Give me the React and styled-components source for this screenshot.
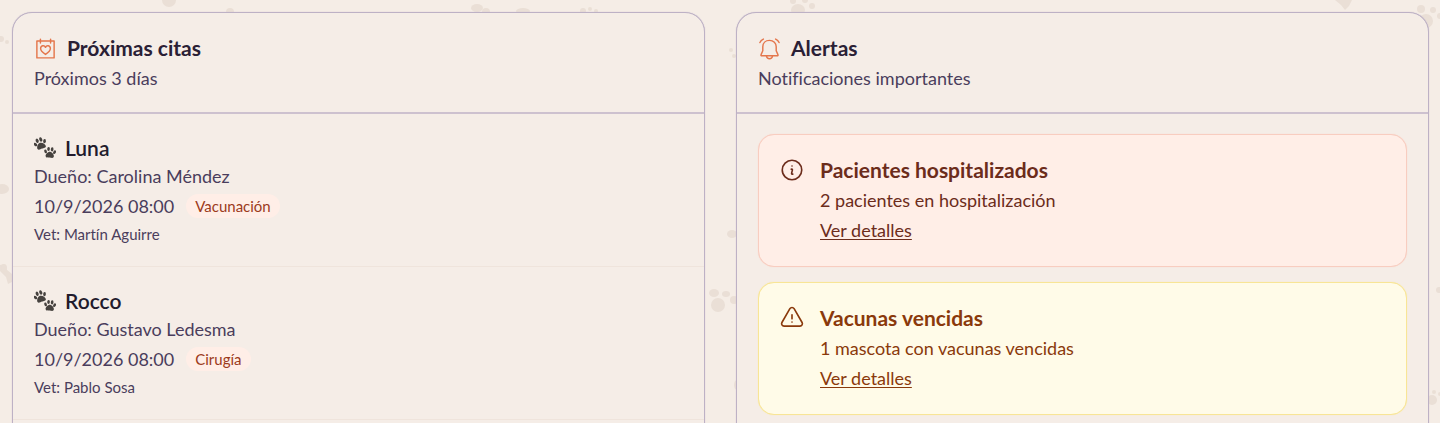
import React from 'react';
import styled, { createGlobalStyle } from 'styled-components';
import { HiOutlineInformationCircle, HiOutlineExclamationTriangle } from 'react-icons/hi2';

const GlobalStyle = createGlobalStyle`
  * { box-sizing: border-box; }
  body {
    margin: 0;
    background: #f5ede6;
    color: #4a3d5c;
    font-family: Lato, "Open Sans", sans-serif;
    font-size: 18px;
    line-height: 26px;
    font-variant-ligatures: none;
  }
  h2, h3, p, ul { margin: 0; padding: 0; }
`;

const Page = styled.main`
  position: relative;
  height: 100vh;
  overflow: hidden;
  padding: 12px 11px 0 12px;
  display: grid;
  grid-template-columns: 1fr 1fr;
  gap: 31px;
`;

const Backdrop = styled.svg`
  position: absolute;
  top: 0;
  left: 0;
  width: 100%;
  height: 100%;
  fill: #eadfd6;
`;

const Card = styled.section`
  position: relative;
  min-height: 480px;
  background: #f5ede7;
  border: 1px solid #bdb1c5;
  border-radius: 20px;
  box-shadow: 0 0 1px #bdb1c5;
`;

const CardHeader = styled.header`
  padding: 21px;
  border-bottom: 2px solid #cdc1cf;
`;

const TitleRow = styled.div`
  display: flex;
  align-items: center;
  gap: 10px;
  height: 28px;
  margin-bottom: 3px;
  svg { width: 23px; height: 23px; }
`;

const CardTitle = styled.h2`
  font-size: 21px;
  line-height: 28px;
  font-weight: 700;
  color: #2a2035;
`;

const List = styled.ul`
  list-style: none;
`;

const Appointment = styled.li`
  padding: 20px 21px;
  border-bottom: 1px solid #efe4dc;
`;

const PetRow = styled.div`
  display: flex;
  align-items: center;
  gap: 9px;
  svg { width: 22px; height: 22px; }
`;

const PetName = styled.h3`
  font-size: 21px;
  line-height: 28px;
  font-weight: 600;
  color: #221b2c;
`;

const Owner = styled.p`
  line-height: 28px;
`;

const When = styled.div`
  display: flex;
  align-items: center;
  gap: 12px;
  height: 32px;
`;

const Badge = styled.span`
  padding: 0 9px;
  border-radius: 12px;
  background: #ffeee7;
  color: #9c3b1c;
  font-size: 15px;
  line-height: 24px;
`;

const Vet = styled.p`
  font-size: 15px;
  line-height: 24px;
`;

const Alerts = styled.div`
  display: grid;
  gap: 15px;
  padding: 20px 21px;
`;

const tones = {
  coral: { bg: '#ffeee7', line: '#f8cdc0', text: '#6c2c1b' },
  amber: { bg: '#fffbe8', line: '#f8e596', text: '#8a390b' },
};

const AlertBox = styled.article`
  display: flex;
  align-items: flex-start;
  gap: 15px;
  padding: 22px 20px 23px;
  border: 1px solid ${({ $tone }) => tones[$tone].line};
  border-radius: 16px;
  background: ${({ $tone }) => tones[$tone].bg};
  color: ${({ $tone }) => tones[$tone].text};
  box-shadow: 0 0 1px ${({ $tone }) => tones[$tone].line};
  > svg { width: 26px; height: 26px; flex: none; }
`;

const AlertBody = styled.div`
  display: grid;
  gap: 4px;
  justify-items: start;
`;

const AlertTitle = styled.h3`
  font-size: 21px;
  line-height: 26px;
  font-weight: 700;
`;

const DetailLink = styled.a`
  color: inherit;
  text-decoration: underline;
  text-underline-offset: 2px;
`;

const CalendarHeart = () => (
  <svg viewBox="0 0 24 24" fill="none" stroke="#e4764c" strokeWidth="1.5" strokeLinejoin="round" strokeLinecap="round" aria-hidden="true">
    <path d="M3 4.2h18v17.6H3zM6.7 2.2v4M17.3 2.2v4" />
    <path d="M12 18.2C9 16.2 6.9 14.3 6.9 12c0-3.3 3.9-4 5.1-1.2C13.2 8 17.1 8.7 17.1 12c0 2.3-2.1 4.2-5.1 6.2z" />
  </svg>
);

const RingingBell = () => (
  <svg viewBox="0 0 24 24" fill="none" stroke="#e4764c" strokeWidth="1.5" strokeLinejoin="round" strokeLinecap="round" aria-hidden="true">
    <path d="M12 3.500c-4.200 0-7 2.800-7 6.800v4L3.200 18.400c-.3.800 0 1.100.8 1.100h16c.8 0 1.100-.3.800-1.100L19 14.300v-4c0-4-2.800-6.800-7-6.800z" />
    <path d="M8.800 19.700c.3 2 1.500 3 3.200 3s2.900-1 3.200-3M5.600 2.200C3.900 3 2.700 4.200 2 5.800M18.400 2.200c1.700.8 2.900 2 3.600 3.600" />
  </svg>
);

const Paw = ({ transform }) => (
  <g transform={transform}>
    <path d="M0-1C3-1 6 3 5.5 5.2 5 7.7 2 6.6 0 6.6S-5 7.7-5.5 5.2C-6 3-3-1 0-1z" />
    <ellipse cx="-6" cy="-1" rx="1.7" ry="2.6" transform="rotate(-25 -6 -1)" />
    <ellipse cx="-2.4" cy="-4.6" rx="1.8" ry="2.8" />
    <ellipse cx="2.4" cy="-4.6" rx="1.8" ry="2.8" />
    <ellipse cx="6" cy="-1" rx="1.7" ry="2.6" transform="rotate(25 6 -1)" />
  </g>
);

const PawPrints = () => (
  <svg viewBox="0 0 24 24" fill="#46423f" aria-hidden="true">
    <Paw transform="translate(6.8 7.2) rotate(-20) scale(.88)" />
    <Paw transform="translate(17.5 17) rotate(5) scale(.82)" />
  </svg>
);

const PetPattern = () => (
  <Backdrop aria-hidden="true">
    <circle cx="169" cy="0" r="7" />
    <circle cx="230" cy="12" r="4" />
    <circle cx="1" cy="39" r="3" />
    <circle cx="7" cy="42" r="2" />
    <ellipse cx="2" cy="189" rx="7" ry="5" />
    <path d="M0 265l4-1 2 5 6 5v8l-4 2-2-7-6-6z" />
    <ellipse cx="4" cy="268" rx="3" ry="4" />
    <ellipse cx="477" cy="8" rx="6" ry="4" />
    <circle cx="486" cy="12" r="4" />
    <ellipse cx="523" cy="11" rx="7" ry="3" />
    <circle cx="583" cy="11" r="3" />
    <circle cx="590" cy="9" r="2" />
    <circle cx="596" cy="11" r="2" />
    <circle cx="731" cy="50" r="2" />
    <circle cx="734" cy="56" r="2" />
    <ellipse cx="732" cy="234" rx="5" ry="4" />
    <ellipse cx="714" cy="293" rx="5" ry="4" />
    <ellipse cx="726" cy="294" rx="4" ry="3" />
    <circle cx="734" cy="300" r="4" />
    <circle cx="718" cy="305" r="7" />
    <ellipse cx="737" cy="385" rx="3" ry="5" />
    <ellipse cx="798" cy="10" rx="7" ry="6" />
    <circle cx="793" cy="1" r="3" />
    <circle cx="805" cy="0" r="3" />
    <circle cx="812" cy="6" r="3" />
    <path d="M1335 0h17l-3 6-4 4-4-5z" />
    <circle cx="1421" cy="9" r="4" />
    <circle cx="1433" cy="10" r="3" />
    <circle cx="1440" cy="16" r="3" />
    <circle cx="1426" cy="21" r="7" />
    <circle cx="1439" cy="290" r="3" />
    <circle cx="1434" cy="392" r="2" />
    <circle cx="1440" cy="394" r="2" />
    <circle cx="1432" cy="400" r="5" />
  </Backdrop>
);

const appointments = [
  { pet: 'Luna', owner: 'Carolina Méndez', when: '10/9/2026 08:00', kind: 'Vacunación', vet: 'Martín Aguirre' },
  { pet: 'Rocco', owner: 'Gustavo Ledesma', when: '10/9/2026 08:00', kind: 'Cirugía', vet: 'Pablo Sosa' },
];

const alerts = [
  { tone: 'coral', Icon: HiOutlineInformationCircle, title: 'Pacientes hospitalizados', text: '2 pacientes en hospitalización' },
  { tone: 'amber', Icon: HiOutlineExclamationTriangle, title: 'Vacunas vencidas', text: '1 mascota con vacunas vencidas' },
];

export default function App() {
  return (
    <>
      <GlobalStyle />
      <Page>
        <PetPattern />
        <Card>
          <CardHeader>
            <TitleRow><CalendarHeart /><CardTitle>Próximas citas</CardTitle></TitleRow>
            <p>Próximos 3 días</p>
          </CardHeader>
          <List>
            {appointments.map((a) => (
              <Appointment key={a.pet}>
                <PetRow><PawPrints /><PetName>{a.pet}</PetName></PetRow>
                <Owner>Dueño: {a.owner}</Owner>
                <When><time>{a.when}</time><Badge>{a.kind}</Badge></When>
                <Vet>Vet: {a.vet}</Vet>
              </Appointment>
            ))}
          </List>
        </Card>
        <Card>
          <CardHeader>
            <TitleRow><RingingBell /><CardTitle>Alertas</CardTitle></TitleRow>
            <p>Notificaciones importantes</p>
          </CardHeader>
          <Alerts>
            {alerts.map(({ tone, Icon, title, text }) => (
              <AlertBox key={title} $tone={tone}>
                <Icon aria-hidden="true" />
                <AlertBody>
                  <AlertTitle>{title}</AlertTitle>
                  <p>{text}</p>
                  <DetailLink href="#detalles">Ver detalles</DetailLink>
                </AlertBody>
              </AlertBox>
            ))}
          </Alerts>
        </Card>
      </Page>
    </>
  );
}
